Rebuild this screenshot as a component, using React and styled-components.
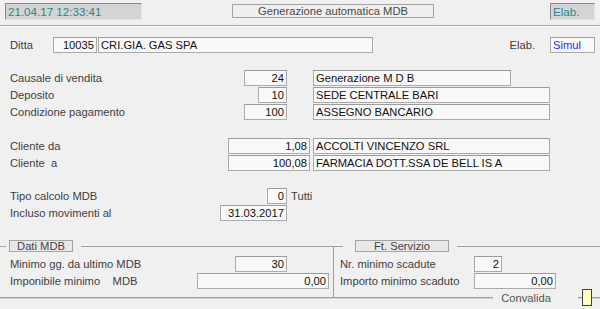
import React from 'react';
import styled, { createGlobalStyle } from 'styled-components';

const GlobalStyle = createGlobalStyle`
  *, *::before, *::after { box-sizing: border-box; }
  html, body {
    margin: 0;
    padding: 0;
    background: #f0f0f0;
  }
  body {
    font-family: "Liberation Sans", Arial, sans-serif;
    font-size: 11.2px;
    color: #3c3c3c;
  }
`;

function App() {
    return (
        <Screen>
            <GlobalStyle />
            <TopBar>
                <StatusBox $w={137}>21.04.17 12:33:41</StatusBox>
                <TitleBox>Generazione automatica MDB</TitleBox>
                <StatusBox $w={45} style={{ marginLeft: 'auto' }}>Elab.</StatusBox>
            </TopBar>

            <Form>
                <Group $mt={11}>
                    <Row>
                        <Label $w={43}>Ditta</Label>
                        <Field $w={44} $right>10035</Field>
                        <Field $w={275} $ml={1}>CRI.GIA. GAS SPA</Field>
                        <ElabGroup>
                            <Label>Elab.</Label>
                            <Field $w={45} $ml={15} $blue>Simul</Field>
                        </ElabGroup>
                    </Row>
                </Group>

                <Group $mt={17}>
                    <Row>
                        <LeftPart $w={277}>
                            <Label>Causale di vendita</Label>
                            <Field $w={43} $right>24</Field>
                        </LeftPart>
                        <Field $w={198} $ml={26}>Generazione M D B</Field>
                    </Row>
                    <Row>
                        <LeftPart $w={277}>
                            <Label>Deposito</Label>
                            <Field $w={29} $right>10</Field>
                        </LeftPart>
                        <Field $w={237} $ml={26}>SEDE CENTRALE BARI</Field>
                    </Row>
                    <Row>
                        <LeftPart $w={277}>
                            <Label>Condizione pagamento</Label>
                            <Field $w={43} $right>100</Field>
                        </LeftPart>
                        <Field $w={237} $ml={26}>ASSEGNO BANCARIO</Field>
                    </Row>
                </Group>

                <Group $mt={18}>
                    <Row>
                        <LeftPart $w={300}>
                            <Label>Cliente da</Label>
                            <Field $w={82} $right>1,08</Field>
                        </LeftPart>
                        <Field $w={237} $ml={3}>ACCOLTI VINCENZO SRL</Field>
                    </Row>
                    <Row>
                        <LeftPart $w={300}>
                            <Label>{'Cliente  a'}</Label>
                            <Field $w={82} $right>100,08</Field>
                        </LeftPart>
                        <Field $w={237} $ml={3}>FARMACIA DOTT.SSA DE BELL IS A</Field>
                    </Row>
                </Group>

                <Group $mt={17}>
                    <Row>
                        <LeftPart $w={277}>
                            <Label>Tipo calcolo MDB</Label>
                            <Field $w={20} $right>0</Field>
                        </LeftPart>
                        <Hint>Tutti</Hint>
                    </Row>
                    <Row>
                        <LeftPart $w={277}>
                            <Label>Incluso movimenti al</Label>
                            <Field $w={67} $right>31.03.2017</Field>
                        </LeftPart>
                    </Row>
                </Group>
            </Form>

            <Section>
                <LeftSet>
                    <Legend $ml={6} $pl={3}>
                        <LegendBox $w={64}>Dati MDB</LegendBox>
                    </Legend>
                    <SetBody $pl={10}>
                        <Row>
                            <LeftPart $w={277}>
                                <Label>Minimo gg. da ultimo MDB</Label>
                                <Field $w={52} $right>30</Field>
                            </LeftPart>
                        </Row>
                        <Row>
                            <LeftPart $w={319}>
                                <Label>{'Imponibile minimo    MDB'}</Label>
                                <Field $w={132} $right>0,00</Field>
                            </LeftPart>
                        </Row>
                    </SetBody>
                </LeftSet>
                <RightSet>
                    <Legend $ml={9} $pl={12}>
                        <LegendBox $w={94}>Ft. Servizio</LegendBox>
                    </Legend>
                    <SetBody $pl={6}>
                        <Row>
                            <LeftPart $w={162}>
                                <Label>Nr. minimo scadute</Label>
                                <Field $w={28} $right>2</Field>
                            </LeftPart>
                        </Row>
                        <Row>
                            <LeftPart $w={216}>
                                <Label>Importo minimo scaduto</Label>
                                <Field $w={82} $right>0,00</Field>
                            </LeftPart>
                        </Row>
                    </SetBody>
                </RightSet>
            </Section>

            <Footer>
                <Line />
                <FooterLabel>Convalida</FooterLabel>
                <Line $w={4} />
                <CheckBox />
                <Line $w={8} />
            </Footer>
        </Screen>
    );
}

export default App;

const Screen = styled.div`
    width: 600px;
    height: 309px;
    overflow: hidden;
    background: #f0f0f0;
`;

const TopBar = styled.div`
    display: flex;
    align-items: flex-start;
    height: 26px;
    padding: 3px 5px 0 5px;
    border-bottom: 1px solid #a0a0a0;
    box-shadow: 0 1px 0 #ffffff;
`;

const StatusBox = styled.div`
    width: ${p => p.$w}px;
    height: 17px;
    padding-left: 2px;
    line-height: 15px;
    background: #d4d4d4;
    border: 1px solid;
    border-color: #8a8a8a #e4e4e4 #e4e4e4 #8a8a8a;
    color: #1e8a8e;
    font-size: 11.6px;
    white-space: nowrap;
`;

const TitleBox = styled.div`
    margin-left: 90px;
    margin-top: 1px;
    width: 202px;
    height: 14px;
    line-height: 12px;
    border: 1px solid #a4a4a4;
    background: #efefef;
    text-align: center;
    color: #4a4a4a;
`;

const Form = styled.div`
    padding: 0 5px 0 10px;
`;

const Group = styled.div`
    display: flex;
    flex-direction: column;
    gap: 1px;
    margin-top: ${p => p.$mt || 0}px;
`;

const Row = styled.div`
    display: flex;
    align-items: center;
    height: 16px;
`;

const LeftPart = styled.div`
    display: flex;
    align-items: center;
    width: ${p => p.$w}px;
    flex-shrink: 0;
`;

const Label = styled.div`
    ${p => p.$w ? `width: ${p.$w}px;` : 'flex: 1;'}
    white-space: pre;
    color: #404040;
`;

const Field = styled.div`
    width: ${p => p.$w}px;
    height: 16px;
    margin-left: ${p => p.$ml || 0}px;
    padding: 0 2px;
    line-height: 14px;
    flex-shrink: 0;
    background: #f9f9f9;
    border: 1px solid #aaaaaa;
    border-top-color: #9c9c9c;
    color: ${p => p.$blue ? '#2a2af0' : '#111'};
    text-align: ${p => p.$right ? 'right' : 'left'};
    white-space: nowrap;
    overflow: hidden;
`;

const ElabGroup = styled.div`
    display: flex;
    align-items: center;
    margin-left: auto;
`;

const Hint = styled.div`
    margin-left: 4px;
    color: #444;
`;

const Section = styled.div`
    display: flex;
    margin-top: 19px;
`;

const LeftSet = styled.fieldset`
    margin: 0;
    padding: 0;
    min-width: 0;
    width: 334px;
    border: 0;
    border-top: 1px solid #a0a0a0;
    border-right: 1px solid #a0a0a0;
`;

const RightSet = styled.fieldset`
    margin: 0;
    padding: 0;
    min-width: 0;
    flex: 1;
    border: 0;
    border-top: 1px solid #a0a0a0;
`;

const Legend = styled.legend`
    margin-left: ${p => p.$ml}px;
    padding: 0 8px 0 ${p => p.$pl}px;
`;

const LegendBox = styled.span`
    display: block;
    width: ${p => p.$w}px;
    height: 12px;
    line-height: 10px;
    border: 1px solid #a4a4a4;
    background: #e8e8e8;
    text-align: center;
    color: #444;
`;

const SetBody = styled.div`
    display: flex;
    flex-direction: column;
    gap: 1px;
    padding: 4px 0 8px ${p => p.$pl}px;
`;

const Footer = styled.div`
    display: flex;
    align-items: center;
    height: 17px;
    margin-top: -8px;
`;

const Line = styled.div`
    ${p => p.$w ? `width: ${p.$w}px;` : 'flex: 1;'}
    height: 2px;
    border-top: 1px solid #a0a0a0;
    border-bottom: 1px solid #d2d2d2;
`;

const FooterLabel = styled.div`
    padding: 0 27px 0 8px;
    color: #555;
    background: #f0f0f0;
`;

const CheckBox = styled.div`
    width: 10px;
    height: 17px;
    background: #ffffc4;
    border: 1px solid #404040;
`;
